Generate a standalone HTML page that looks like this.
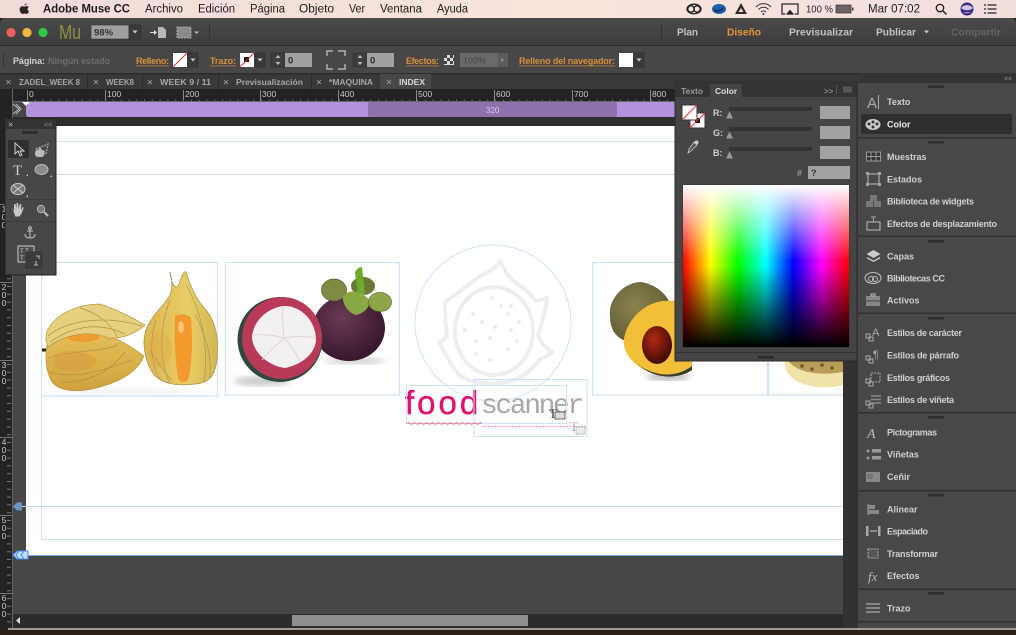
<!DOCTYPE html>
<html><head><meta charset="utf-8"><style>
html,body{margin:0;padding:0;background:#2a2018;width:1016px;height:635px;overflow:hidden}
svg{display:block;font-family:"Liberation Sans",sans-serif;filter:blur(.35px)}
.m{font-size:11.5px;fill:#1f1a1a}
.b{font-size:9px;font-weight:bold;fill:#d0d0d0}
.o{font-size:9px;font-weight:bold;fill:#d8913a}
.t{font-size:8.5px;font-weight:bold;fill:#a6a6a6}
.r{font-size:8.5px;fill:#c8c8c8}
.n{font-size:10.5px;font-weight:bold;fill:#c4c4c4}
.i{fill:none;stroke:#aaa;stroke-width:1.2}
.f{fill:#a4a4a4}
</style></head><body>
<svg width="1016" height="635" viewBox="0 0 1016 635" xmlns="http://www.w3.org/2000/svg">
<defs>
<linearGradient id="mb" x1="0" x2="1" y1="0" y2="0"><stop offset="0" stop-color="#f3dcd8"/><stop offset=".55" stop-color="#fbe4dc"/><stop offset="1" stop-color="#f2dedd"/></linearGradient>
<linearGradient id="tb" x1="0" x2="0" y1="0" y2="1"><stop offset="0" stop-color="#4a4a4a"/><stop offset="1" stop-color="#3d3d3d"/></linearGradient>
<linearGradient id="sp" x1="0" x2="1" y1="0" y2="0"><stop offset="0" stop-color="#f00"/><stop offset=".1667" stop-color="#ff0"/><stop offset=".3333" stop-color="#0f0"/><stop offset=".5" stop-color="#0ff"/><stop offset=".6667" stop-color="#00f"/><stop offset=".8333" stop-color="#f0f"/><stop offset="1" stop-color="#f00"/></linearGradient>
<linearGradient id="wb" x1="0" x2="0" y1="0" y2="1"><stop offset="0" stop-color="#fff"/><stop offset=".47" stop-color="#fff" stop-opacity="0"/><stop offset=".5" stop-color="#000" stop-opacity="0"/><stop offset="1" stop-color="#000"/></linearGradient>
<radialGradient id="pu" cx=".4" cy=".35" r=".7"><stop offset="0" stop-color="#6b3a52"/><stop offset="1" stop-color="#33152b"/></radialGradient>
<radialGradient id="ma" cx=".4" cy=".4" r=".7"><stop offset="0" stop-color="#8a8250"/><stop offset="1" stop-color="#5c5a30"/></radialGradient>
<radialGradient id="se" cx=".4" cy=".35" r=".7"><stop offset="0" stop-color="#b02a14"/><stop offset="1" stop-color="#3a0804"/></radialGradient>
<linearGradient id="hu" x1="0" x2="0" y1="0" y2="1"><stop offset="0" stop-color="#e2bd57"/><stop offset=".6" stop-color="#d9ae48"/><stop offset="1" stop-color="#cfa040"/></linearGradient>
<linearGradient id="hr" x1="0" x2="1" y1="0" y2="0"><stop offset="0" stop-color="#dcb550"/><stop offset=".6" stop-color="#e8cd66"/><stop offset="1" stop-color="#d3b650"/></linearGradient>
<filter id="bl"><feGaussianBlur stdDeviation="3"/></filter>
</defs>

<rect width="1016" height="635" fill="#2a2018"/>
<rect width="1016" height="18" fill="url(#mb)"/>
<path d="M25 5.500C26 5 26.500 4.500 26.600 3.200 25.400 3.500 24.500 4.300 24.600 5.500ZM22.600 6.200C21 6.200 19.600 7.400 19.600 9.400 19.600 11.800 21.400 14 22.600 14 23.300 14 23.700 13.500 24.600 13.500 25.500 13.500 25.900 14 26.600 14 27.700 14 28.800 12.200 29 11.300 27.200 10.500 27.100 8 28.800 7 28 6.300 27.200 6.100 26.500 6.100 25.700 6.100 25 6.600 24.600 6.600 24.100 6.600 23.400 6.200 22.600 6.200Z" fill="#2a2626"/>
<text x="43" y="12.500" class="m" font-weight="bold" textLength="87" lengthAdjust="spacingAndGlyphs">Adobe Muse CC</text>
<text x="145" y="12.500" class="m" textLength="38" lengthAdjust="spacingAndGlyphs">Archivo</text>
<text x="198" y="12.500" class="m" textLength="37" lengthAdjust="spacingAndGlyphs">Edición</text>
<text x="250" y="12.500" class="m" textLength="35" lengthAdjust="spacingAndGlyphs">Página</text>
<text x="299" y="12.500" class="m" textLength="35" lengthAdjust="spacingAndGlyphs">Objeto</text>
<text x="349" y="12.500" class="m" textLength="16" lengthAdjust="spacingAndGlyphs">Ver</text>
<text x="380" y="12.500" class="m" textLength="42" lengthAdjust="spacingAndGlyphs">Ventana</text>
<text x="437" y="12.500" class="m" textLength="31" lengthAdjust="spacingAndGlyphs">Ayuda</text>
<g fill="none" stroke="#222" stroke-width="1.300"><circle cx="691" cy="9" r="3.200"/><circle cx="697" cy="9" r="3.200"/><ellipse cx="694" cy="9" rx="7" ry="4.800"/></g>
<ellipse cx="719" cy="9" rx="7" ry="5" fill="#1b5fa8"/><path d="M714 10c3 2 7 1 9-2" stroke="#0b2b55" stroke-width="1.600" fill="none"/>
<path d="M741 3l6 11h-12z" fill="#332a2a"/><path d="M741 8l2.400 4h-4.800z" fill="#f6e0da"/>
<g fill="none" stroke="#333" stroke-width="1.100"><path d="M756 7c4-4.500 11-4.500 15 0"/><path d="M758.500 9.500c2.800-3 7.200-3 10 0"/><path d="M761 12c1.500-1.500 3.500-1.500 5 0"/></g><circle cx="763.500" cy="14" r="1" fill="#333"/>
<rect x="782" y="4" width="16" height="10" fill="none" stroke="#222" stroke-width="1.200"/><path d="M790 9l5 6h-10z" fill="#222" stroke="#f8e2dc" stroke-width=".8"/>
<text x="806" y="12.500" font-size="10.500" fill="#222" textLength="27" lengthAdjust="spacingAndGlyphs">100 %</text>
<rect x="836" y="5" width="15" height="8" fill="#666" stroke="#333" stroke-width=".7"/><rect x="852" y="7.500" width="1.500" height="3" fill="#333"/>
<text x="868" y="12.500" font-size="11.500" fill="#222" textLength="52" lengthAdjust="spacingAndGlyphs">Mar 07:02</text>
<circle cx="940" cy="8" r="3.700" fill="none" stroke="#222" stroke-width="1.300"/><path d="M943 11l3.500 3.500" stroke="#222" stroke-width="1.500"/>
<circle cx="967" cy="9" r="6.500" fill="#2b2f86"/><path d="M961 8c3-4 9-4 12 0-3 3-9 3-12 0z" fill="#d9c0e8"/><path d="M963 12c2 1.800 6 1.800 8 0z" fill="#e06aa8"/>
<g stroke="#222" stroke-width="1.300"><path d="M984 5h2M987.500 5h9M984 9h2M987.500 9h9M984 13h2M987.500 13h9"/></g>

<path d="M0 24Q0 18 6 18H1010Q1016 18 1016 24V628H0Z" fill="#474747"/>
<path d="M0 24Q0 18 6 18H1010Q1016 18 1016 24V45H0Z" fill="url(#tb)"/>
<rect y="45" width="1016" height="1" fill="#2f2f2f"/>
<circle cx="11" cy="32.500" r="4.600" fill="#ee5f5b"/><circle cx="27" cy="32.500" r="4.600" fill="#f5b63f"/><circle cx="43" cy="32.500" r="4.600" fill="#33c748"/>
<text x="59" y="39" font-size="20" fill="#8f9146" textLength="22" lengthAdjust="spacingAndGlyphs">Mu</text>
<rect x="91" y="25" width="38" height="14" fill="#a0a0a0" stroke="#333" stroke-width=".6"/>
<text x="94" y="35.500" font-size="9.500" font-weight="bold" fill="#333">98%</text>
<rect x="129" y="25" width="12" height="14" fill="#3a3a3a" stroke="#2c2c2c" stroke-width=".6"/><path d="M132.500 30.500h5l-2.500 3z" fill="#ccc"/>
<path d="M158 27h5l3 3v8h-8z" fill="#b8b8b8"/><path d="M150 32h4v-2l3 2.500-3 2.500v-2h-4z" fill="#ddd"/>
<rect x="177" y="27" width="14" height="11" fill="#8a8a8a" stroke="#bbb" stroke-width=".8" stroke-dasharray="2 1"/><path d="M194 31.500h5l-2.500 2.500z" fill="#bbb"/>
<rect x="209" y="24" width="1" height="16" fill="#333"/><rect x="661" y="24" width="1" height="16" fill="#333"/>
<text x="677" y="35.500" class="n" textLength="21" lengthAdjust="spacingAndGlyphs">Plan</text>
<text x="727" y="35.500" class="n" style="fill:#e8963a" textLength="34" lengthAdjust="spacingAndGlyphs">Diseño</text>
<text x="789" y="35.500" class="n" textLength="64" lengthAdjust="spacingAndGlyphs">Previsualizar</text>
<text x="876" y="35.500" class="n" textLength="40" lengthAdjust="spacingAndGlyphs">Publicar</text>
<path d="M924 30.500h5l-2.500 3z" fill="#ccc"/>
<text x="951" y="35.500" class="n" style="fill:#666" textLength="50" lengthAdjust="spacingAndGlyphs">Compartir</text>

<rect x="3" y="52" width="1" height="15" fill="#333"/>
<text x="13" y="64" class="b" textLength="32">Página:</text>
<text x="48" y="64" font-size="9" font-weight="bold" fill="#6e6e6e" textLength="62">Ningún estado</text>
<text x="136" y="64" class="o" textLength="33">Relleno:</text><rect x="136" y="65.500" width="33" height=".8" fill="#c8822f"/>
<rect x="173" y="53" width="14" height="14" fill="#fff"/><path d="M173 67L187 53" stroke="#e33" stroke-width="1"/>
<rect x="188" y="53" width="10" height="14" fill="#3a3a3a" stroke="#2e2e2e" stroke-width=".6"/><path d="M190.500 58.500h5l-2.500 3z" fill="#ccc"/>
<text x="210" y="64" class="o" textLength="26">Trazo:</text><rect x="210" y="65.500" width="26" height=".8" fill="#c8822f"/>
<rect x="240" y="53" width="14" height="14" fill="#fff"/><rect x="244" y="57" width="5" height="5" fill="#111"/><path d="M240 67L254 53" stroke="#e33" stroke-width="1"/>
<rect x="255" y="53" width="10" height="14" fill="#3a3a3a" stroke="#2e2e2e" stroke-width=".6"/><path d="M257.500 58.500h5l-2.500 3z" fill="#ccc"/>
<rect x="271" y="53" width="14" height="14" fill="#3d3d3d" stroke="#2e2e2e" stroke-width=".6"/><path d="M275.500 58l2.500-3 2.500 3zM275.500 62l2.500 3 2.500-3z" fill="#bbb"/>
<rect x="285" y="53" width="27" height="14" fill="#a0a0a0"/><text x="288" y="63.500" font-size="9.500" font-weight="bold" fill="#2c2c2c">0</text>
<path d="M327 56v-5h6M338 51h7v5M345 64v5h-7M333 69h-6v-5" fill="none" stroke="#c8c8c8" stroke-width="1.200"/>
<rect x="353" y="53" width="14" height="14" fill="#3d3d3d" stroke="#2e2e2e" stroke-width=".6"/><path d="M357.500 58l2.500-3 2.500 3zM357.500 62l2.500 3 2.500-3z" fill="#bbb"/>
<rect x="367" y="53" width="27" height="14" fill="#a0a0a0"/><text x="370" y="63.500" font-size="9.500" font-weight="bold" fill="#2c2c2c">0</text>
<text x="406" y="64" class="o" textLength="33">Efectos:</text><rect x="406" y="65.500" width="33" height=".8" fill="#c8822f"/>
<rect x="444" y="55" width="10" height="10" fill="#ddd"/><path d="M444 55h3v3h-3zM450 55h3v3h-3zM447 58h3v3h-3zM453 58h1v3h-1zM444 61h3v3h-3zM450 61h3v3h-3z" fill="#444"/>
<rect x="460" y="53" width="38" height="14" fill="#6a6a6a"/><text x="463" y="63.500" font-size="9" font-weight="bold" fill="#505050">100%</text>
<rect x="498" y="53" width="10" height="14" fill="#5c5c5c"/><path d="M501 57.500l3.500 2.500-3.500 2.500z" fill="#858585"/>
<text x="519" y="64" class="o" textLength="96">Relleno del navegador:</text><rect x="519" y="65.500" width="96" height=".8" fill="#c8822f"/>
<rect x="619" y="53" width="14" height="14" fill="#fff"/>
<rect x="634" y="53" width="10" height="14" fill="#3a3a3a" stroke="#2e2e2e" stroke-width=".6"/><path d="M636.500 58.500h5l-2.500 3z" fill="#ccc"/>

<rect y="73" width="1016" height="1.500" fill="#2c2c2c"/>
<rect y="74.500" width="1016" height="14.500" fill="#393939"/>
<rect x="380" y="74" width="51" height="15" fill="#484848"/>
<g fill="#2a2a2a"><rect x="87" y="74" width="1" height="15"/><rect x="142" y="74" width="1" height="15"/><rect x="218" y="74" width="1" height="15"/><rect x="311" y="74" width="1" height="15"/></g>
<g font-size="10" fill="#aaa"><text x="5.500" y="85.500">×</text><text x="93" y="85.500">×</text><text x="147" y="85.500">×</text><text x="223" y="85.500">×</text><text x="316" y="85.500">×</text><text x="386" y="85.500">×</text></g>
<text x="19" y="85" class="t" textLength="61" lengthAdjust="spacingAndGlyphs">ZADEL_WEEK 8</text>
<text x="106" y="85" class="t" textLength="28" lengthAdjust="spacingAndGlyphs">WEEK8</text>
<text x="160" y="85" class="t" textLength="51" lengthAdjust="spacingAndGlyphs">WEEK 9 / 11</text>
<text x="236" y="85" class="t" textLength="67" lengthAdjust="spacingAndGlyphs">Previsualización</text>
<text x="329" y="85" class="t" textLength="44" lengthAdjust="spacingAndGlyphs">*MAQUINA</text>
<text x="399" y="85" class="t" style="fill:#d8d8d8" textLength="26" lengthAdjust="spacingAndGlyphs">INDEX</text>

<rect y="89" width="858" height="539" fill="#474747"/>
<rect y="89" width="13" height="539" fill="#232323"/>
<rect x="843" y="89" width="15" height="539" fill="#323232"/>
<rect x="13" y="117" width="830" height="9" fill="#2e2e2e"/>
<rect x="26" y="126" width="817" height="429" fill="#fff"/>
<rect x="26" y="555" width="817" height="1" fill="#7ab0f0"/>

<g fill="none" stroke="#cfe3f7" stroke-width="1">
<path d="M57 141.500H676"/>
<path d="M57 174.500H676" stroke="#d8d8f6"/>
<path d="M41.500 396V539.500H843"/>
<rect x="41.500" y="262.500" width="176" height="133.500" stroke-width="1.200"/>
<rect x="225.500" y="262.500" width="174" height="132.500" stroke-width="1.200"/>
<rect x="592.500" y="262.500" width="175" height="132.500" stroke-width="1.200"/>
<path d="M843 262.500H768.500V395H843" stroke-width="1.200"/>
<circle cx="493" cy="323" r="78"/>
<path d="M13 506.500H843" stroke="#c4dcf7"/>
</g>

<!-- physalis -->
<ellipse cx="130" cy="391" rx="80" ry="3" fill="#f2f2f2" filter="url(#bl)"/>
<rect x="42" y="348.500" width="6" height="3" fill="#2c2013"/>
<path d="M47 345C70 332 100 333 112 338 120 340 132 347 144 356 138 370 125 380 100 387 80 393 60 392 52 382 45 370 45 355 47 345Z" fill="url(#hu)" stroke="#b8973e" stroke-width=".7"/>
<ellipse cx="83" cy="336" rx="17" ry="6" fill="#ee9c30"/>
<path d="M46 340C44 322 70 304 100 304 118 310 135 319 145 325 134 335 120 339 108 338 88 329 62 336 48 347Z" fill="#e6d080" stroke="#b8973e" stroke-width=".7"/>
<path d="M48 336C70 318 110 316 142 326M50 342C75 325 100 322 125 334M80 308C95 312 110 322 118 338M48 358C75 350 100 352 118 345M50 372C75 380 105 370 132 360M60 382C85 384 110 372 125 352" fill="none" stroke="#ae9240" stroke-width=".7"/>
<path d="M55 354C72 348 90 352 98 362 85 374 65 374 54 366Z" fill="#d8913a" opacity=".4"/>
<path d="M170 273C172 285 176 291 179 284 182 274 185 270 186 272 190 285 196 300 206 310 216 322 219 340 217 360 215 375 210 383 195 384 180 386 165 385 155 376 146 365 141 345 146 330 151 315 165 305 170 295 173 285 172 278 170 272Z" fill="url(#hr)" stroke="#a89050" stroke-width=".7"/>
<path d="M175 316C180 313 188 314 191 318 193 340 192 365 188 380 183 384 180 382 178 378 175 360 174 335 175 316Z" fill="#f29a2c"/>
<ellipse cx="181" cy="327" rx="3" ry="6" fill="#f9c37a"/>
<path d="M170 300C160 325 158 360 170 383M156 320C148 345 152 370 162 381M186 285C198 305 210 340 204 382M196 315C204 335 212 350 210 378M150 350C160 365 166 375 172 380" fill="none" stroke="#a8965a" stroke-width=".7"/>
<ellipse cx="160" cy="350" rx="12" ry="18" fill="#e0a040" opacity=".3"/>

<!-- mangosteen -->
<ellipse cx="262" cy="381" rx="28" ry="5" fill="#ccc" filter="url(#bl)"/>
<ellipse cx="355" cy="361" rx="30" ry="3" fill="#ccc" filter="url(#bl)"/>
<ellipse cx="349" cy="328" rx="36" ry="33" fill="url(#pu)"/>
<ellipse cx="363" cy="286" rx="12" ry="9" fill="#6a7a35"/>
<path d="M358 268L362 267 365 294 358 296 355 272Z" fill="#6eaa2c"/>
<ellipse cx="334" cy="290" rx="12.500" ry="11" fill="#7f8a42" stroke="#5a5530" stroke-width=".7"/>
<path d="M343 296C350 288 362 291 369 300 371 308 362 314 356 315 347 312 342 303 343 296Z" fill="#87a842"/>
<ellipse cx="380" cy="302" rx="11.500" ry="9.500" fill="#8ca546" stroke="#5d6d2e" stroke-width=".7"/>
<circle cx="280" cy="339.500" r="42.500" fill="#2f4a3c"/>
<ellipse cx="282" cy="338" rx="40" ry="41" fill="#b83a58"/>
<path d="M283 306C300 305 316 320 316 340 315 355 300 365 285 368 268 366 252 352 252 336 254 320 268 308 283 306Z" fill="#f3f0f0"/>
<path d="M283 306C282 318 283 330 284 338M252 335C262 334 275 335 284 338M316 338C306 336 294 336 284 338M262 360C270 350 278 344 284 338M300 362C296 352 290 344 284 338" fill="none" stroke="#dcd6d6" stroke-width="1"/>

<!-- dragon fruit logo -->
<g fill="none" stroke="#eeeeee" stroke-width="4" stroke-linejoin="round">
<path d="M501 261C503 270 508 276 515 282 524 288 532 296 536 301L547 298C546 310 542 324 538 335 541 344 547 349 553 352 547 356 543 358 540 359 530 374 515 383 493 384 472 383 460 378 455 370 449 362 444 350 439 343L447 337C445 320 445 310 445 302 456 295 468 285 480 276 488 272 496 268 501 261Z"/>
<ellipse cx="494" cy="331" rx="39" ry="44"/>
</g>
<g fill="#ececec"><circle cx="492" cy="298" r="2"/><circle cx="501" cy="306" r="2"/><circle cx="511" cy="306" r="2"/><circle cx="473" cy="314" r="2"/><circle cx="482" cy="322" r="2"/><circle cx="508" cy="314" r="2"/><circle cx="519" cy="322" r="2"/><circle cx="465" cy="330" r="2"/><circle cx="495" cy="327" r="2"/><circle cx="511" cy="330" r="2"/><circle cx="476" cy="341" r="2"/><circle cx="490" cy="338" r="2"/><circle cx="517" cy="341" r="2"/><circle cx="508" cy="349" r="2"/><circle cx="476" cy="354" r="2"/><circle cx="490" cy="360" r="2"/></g>

<!-- mango -->
<ellipse cx="668" cy="377" rx="22" ry="3" fill="#aaa" filter="url(#bl)"/>
<path d="M610 316C608 298 625 282 641 282 655 284 668 294 672 308L628 342C616 338 610 330 610 316Z" fill="url(#ma)"/>
<path d="M663 301C645 303 628 318 624 338 622 352 632 365 650 372 665 377 680 374 692 366L690 300Z" fill="#f4bf38"/>
<path d="M634 360C640 368 650 372 660 374 672 376 684 372 692 366V370C678 380 650 380 634 360Z" fill="#3b4020"/>
<ellipse cx="657" cy="345" rx="15" ry="19" fill="url(#se)"/>
<!-- passion fruit -->
<path d="M785 361H843V385C825 390 795 388 786 370Z" fill="#efe3aa"/>
<path d="M788 361H843V372C825 375 800 375 788 361Z" fill="#b89c58"/>
<g fill="#6e5a30"><circle cx="802" cy="366" r="1.800"/><circle cx="812" cy="369" r="1.800"/><circle cx="822" cy="365" r="1.800"/><circle cx="832" cy="368" r="1.800"/></g>

<!-- food scanner -->
<text x="481" y="413" font-family="'Liberation Mono',monospace" font-size="28" fill="#a8a8a8" letter-spacing="-2.400">scanner</text>
<text x="405" y="414" font-size="33" fill="#e0106e" stroke="#e0106e" stroke-width=".4" letter-spacing="3">food</text>
<g fill="none" stroke="#cfe3f7"><rect x="406.500" y="385.500" width="160" height="38"/><rect x="474" y="379.500" width="113" height="57"/></g>
<path d="M407 423.500q1.500-1.500 3 0t3 0 3 0 3 0 3 0 3 0 3 0 3 0 3 0 3 0 3 0 3 0 3 0 3 0 3 0 3 0 3 0 3 0 3 0 3 0 3 0 3 0 3 0 3 0 3 0" fill="none" stroke="#e06080" stroke-width=".9"/>
<path d="M482 426.500H587" stroke="#f2a8b0" stroke-width="1.200" stroke-dasharray="2 1"/>
<text x="549" y="418" font-family="'Liberation Serif',serif" font-size="13" fill="#333">T</text><rect x="555" y="412" width="10" height="7" fill="#ddd" stroke="#333" stroke-width=".7"/>
<text x="570" y="431" font-family="'Liberation Serif',serif" font-size="13" fill="#aaa">T</text><rect x="576" y="427" width="9" height="7" fill="#eee" stroke="#aaa" stroke-width=".7"/>

<!-- rulers -->
<rect x="13" y="89" width="830" height="13" fill="#232323"/>
<g fill="#8a8a8a"><rect x="27" y="90" width="1" height="11"/><rect x="105" y="90" width="1" height="11"/><rect x="183" y="90" width="1" height="11"/><rect x="260" y="90" width="1" height="11"/><rect x="338" y="90" width="1" height="11"/><rect x="416" y="90" width="1" height="11"/><rect x="494" y="90" width="1" height="11"/><rect x="572" y="90" width="1" height="11"/><rect x="650" y="90" width="1" height="11"/></g>
<path d="M27 100.500H843" stroke="#777" stroke-width="1.500" stroke-dasharray="1 6.800"/>
<g class="r"><text x="29" y="97">0</text><text x="107" y="97">100</text><text x="185" y="97">200</text><text x="262" y="97">300</text><text x="340" y="97">400</text><text x="418" y="97">500</text><text x="496" y="97">600</text><text x="574" y="97">700</text><text x="652" y="97">800</text></g>
<path d="M9 130V628" stroke="#777" stroke-width="4" stroke-dasharray="1 6.800"/>
<g fill="#777"><rect y="204" width="13" height="1"/><rect y="282" width="13" height="1"/><rect y="360" width="13" height="1"/><rect y="437" width="13" height="1"/><rect y="515" width="13" height="1"/><rect y="593" width="13" height="1"/></g>
<g class="r" text-anchor="middle"><text x="4" y="212">1</text><text x="4" y="220">0</text><text x="4" y="228">0</text>
<text x="4" y="290">2</text><text x="4" y="298">0</text><text x="4" y="306">0</text>
<text x="4" y="368">3</text><text x="4" y="376">0</text><text x="4" y="384">0</text>
<text x="4" y="445">4</text><text x="4" y="453">0</text><text x="4" y="461">0</text>
<text x="4" y="523">5</text><text x="4" y="531">0</text><text x="4" y="539">0</text>
<text x="4" y="601">6</text><text x="4" y="609">0</text><text x="4" y="617">0</text></g>
<rect x="12" y="89" width="1" height="539" fill="#666"/>
<rect x="13" y="101" width="830" height="1" fill="#666"/>
<path d="M26 105Q26 102 29 102H843V117H29Q26 117 26 114Z" fill="#b592dd"/>
<rect x="368" y="102" width="249" height="15" rx="2" fill="#8f72ab"/>
<text x="486" y="113" font-size="8" fill="#d8c8e8">320</text>
<path d="M22 102h8l-4 4z" fill="#fff"/>
<path d="M13 104l6 5-6 5M16 104l5 5-5 5" fill="none" stroke="#bbb" stroke-width="1"/>
<path d="M13 506.500l4-4h5v8h-5z" fill="#6b95c0"/>
<path d="M13 555l4-4h11v8H17z" fill="#bfe0ff" stroke="#3c8cf0" stroke-width="1"/><path d="M19 551l-3 4 3 4M24 551l-3 4 3 4" fill="none" stroke="#3c8cf0"/>
<!-- scrollbar -->
<rect x="13" y="614" width="830" height="14" fill="#2c2c2c"/>
<rect x="292" y="615" width="236" height="11" fill="#8f8f8f"/>
<path d="M20 617l-4 3.500 4 3.500z" fill="#ddd"/>
<rect x="8" y="628" width="1008" height="2" fill="#9a9a9a"/>
<rect y="630" width="1016" height="5" fill="#2a2018"/>

<!-- tools panel -->
<rect x="5" y="119" width="51" height="156" fill="#474747" stroke="#222" stroke-width="1"/>
<rect x="5" y="119" width="51" height="10" fill="#333"/>
<text x="8" y="127.500" font-size="9" fill="#bbb">×</text>
<text x="44" y="127" font-size="7" fill="#999">&lt;&lt;</text>
<rect x="22" y="131" width="16" height="3" fill="#2e2e2e"/>
<rect x="8" y="140" width="21" height="18" fill="#2f2f2f"/>
<path d="M15 143v11l3-3 2 5 2-1-2-4h4z" fill="#333" stroke="#ddd" stroke-width=".9"/>
<path d="M36 149l12-5-2 10h-8z" fill="none" stroke="#aaa" stroke-width="1.200" stroke-dasharray="2 1"/><path d="M35 155c0-4 1-6 3-5l2-3 2 3 3 1-2 6h-6z" fill="#bbb"/>
<text x="13" y="175" font-family="'Liberation Serif',serif" font-size="15" fill="#ccc">T</text>
<ellipse cx="41.500" cy="169.500" rx="6.500" ry="5" fill="#8c8c8c" stroke="#bbb"/>
<ellipse cx="18" cy="189" rx="7" ry="5.500" fill="#777" stroke="#ccc"/><path d="M13 185l10 8M23 185l-10 8" stroke="#ccc"/>
<path d="M12 207l2 4v-7l1.500 0 1 5v-6h1.500l.8 6 1-5h1.500l-.3 6 1.800-3 1 .7-2.500 6.300-2 2.500h-4z" fill="#c8c8c8"/>
<circle cx="41" cy="209" r="3.600" fill="#777" stroke="#bbb"/><path d="M44 212l4 4" stroke="#bbb" stroke-width="2"/>
<rect x="6" y="199" width="49" height=".8" fill="#3a3a3a"/><rect x="6" y="221" width="49" height=".8" fill="#3a3a3a"/>
<path d="M30 228v10M27 231h6M25 234c0 3 2 4 5 4s5-1 5-4" fill="none" stroke="#bbb" stroke-width="1.100"/><circle cx="30" cy="228" r="1.400" fill="none" stroke="#bbb"/>
<rect x="18" y="246" width="16" height="16" fill="#4d4d4d" stroke="#ccc"/><text x="20" y="253" font-size="6" fill="#ccc">T T</text><text x="20" y="260" font-size="6" fill="#ccc">T T</text>
<rect x="26" y="252" width="16" height="16" fill="#3c3c3c" stroke="#333"/><path d="M36 256h3v3M34 265h4M36 261v4" stroke="#bbb" fill="none"/>
<path d="M26 176l2 0v-2zM50 177l2 0v-2zM26 197l2 0v-2z" fill="#ccc"/>

<!-- right panel -->
<rect x="858" y="73" width="158" height="555" fill="#484848"/>
<rect x="858" y="73" width="158" height="10" fill="#343434"/>
<text x="1004" y="81" font-size="7" fill="#999">&lt;&lt;</text>
<g fill="#303030"><rect x="858" y="137" width="158" height="1.500"/><rect x="858" y="235.500" width="158" height="1.500"/><rect x="858" y="312.500" width="158" height="1.500"/><rect x="858" y="412" width="158" height="1.500"/><rect x="858" y="490" width="158" height="1.500"/><rect x="858" y="588.500" width="158" height="1.500"/><rect x="858" y="621" width="158" height="1.500"/></g>
<g fill="#2e2e2e"><rect x="928" y="85.500" width="16" height="2.500"/><rect x="928" y="141" width="16" height="2.500"/><rect x="928" y="240" width="16" height="2.500"/><rect x="928" y="317" width="16" height="2.500"/><rect x="928" y="416" width="16" height="2.500"/><rect x="928" y="494" width="16" height="2.500"/><rect x="928" y="592" width="16" height="2.500"/></g>
<rect x="861" y="114" width="151" height="20" rx="2" fill="#2f2f2f"/>
<g class="b">
<text x="887" y="105">Texto</text><text x="887" y="127.500" style="fill:#eee">Color</text>
<text x="887" y="160">Muestras</text><text x="887" y="182.500">Estados</text>
<text x="887" y="204.500" textLength="87">Biblioteca de widgets</text><text x="887" y="227" textLength="110">Efectos de desplazamiento</text>
<text x="887" y="259.500">Capas</text><text x="887" y="281.500" textLength="58">Bibliotecas CC</text><text x="887" y="303.500">Activos</text>
<text x="887" y="336" textLength="75">Estilos de carácter</text><text x="887" y="358.500" textLength="72">Estilos de párrafo</text><text x="887" y="381" textLength="63">Estilos gráficos</text><text x="887" y="403" textLength="67">Estilos de viñeta</text>
<text x="887" y="435.500" textLength="50">Pictogramas</text><text x="887" y="457.500">Viñetas</text><text x="887" y="480">Ceñir</text>
<text x="887" y="512.500">Alinear</text><text x="887" y="534.500" textLength="41">Espaciado</text><text x="887" y="557" textLength="51">Transformar</text><text x="887" y="579">Efectos</text>
<text x="887" y="611.500">Trazo</text>
</g>
<text x="867" y="108" font-size="15" fill="#aaa">A</text><rect x="878" y="95" width="1" height="14" fill="#aaa"/>
<ellipse cx="873" cy="124.500" rx="7.500" ry="5.500" fill="#ccc"/><circle cx="869" cy="124" r="1.500" fill="#333"/><circle cx="873" cy="122" r="1.500" fill="#333"/><circle cx="877" cy="124" r="1.500" fill="#333"/><circle cx="873" cy="127" r="1.500" fill="#333"/>
<rect x="866.500" y="152" width="14" height="9" fill="#333" stroke="#999"/><path d="M871 152v9M876 152v9M867 156.500h13" stroke="#999"/>
<rect x="868" y="174" width="11" height="10" class="i"/><rect x="866" y="172" width="3" height="3" class="f"/><rect x="878" y="172" width="3" height="3" class="f"/><rect x="866" y="183" width="3" height="3" class="f"/><rect x="878" y="183" width="3" height="3" class="f"/>
<rect x="870" y="195" width="7" height="6" fill="#777"/><rect x="866" y="201" width="7" height="6" fill="#777"/><rect x="874" y="201" width="7" height="6" fill="#777"/>
<rect x="867" y="222" width="13" height="8" class="i"/><path d="M873.500 217v5M871 217h5" stroke="#aaa"/>
<path d="M873.500 250l7 4-7 4-7-4z" fill="#ccc"/><path d="M867 257l6.500 3.500 6.500-3.500v1.500l-6.500 3.500-6.500-3.500z" fill="#ccc"/>
<g fill="none" stroke="#bbb" stroke-width="1.100"><ellipse cx="873" cy="278" rx="8" ry="5.500"/><circle cx="871" cy="279" r="2.500"/><circle cx="875" cy="279" r="2.500"/></g>
<rect x="866" y="296" width="14" height="10" fill="#888"/><rect x="871" y="294" width="4" height="2" class="i"/><rect x="866" y="300.500" width="14" height="1" fill="#444"/>
<g fill="none" stroke="#aaa" stroke-width="1"><rect x="866" y="334" width="4" height="4"/><rect x="869" y="337" width="4" height="4"/><rect x="866" y="356" width="4" height="4"/><rect x="869" y="359" width="4" height="4"/><rect x="866" y="379" width="4" height="4"/><rect x="869" y="382" width="4" height="4"/><rect x="866" y="401" width="4" height="4"/><rect x="869" y="404" width="4" height="4"/></g>
<text x="872" y="336" font-size="11" fill="#aaa">A</text>
<text x="873" y="358" font-size="11" fill="#aaa">¶</text>
<rect x="871" y="373" width="9" height="9" fill="none" stroke="#aaa" stroke-dasharray="2 1"/>
<path d="M871 396h10M871 399.500h10M871 403h10" stroke="#888" stroke-width="1.500"/>
<text x="867" y="438" font-family="'Liberation Serif',serif" font-style="italic" font-size="14" fill="#bbb">A</text>
<g fill="#999"><circle cx="868" cy="451" r="1.500"/><circle cx="868" cy="458" r="1.500"/><rect x="872" y="449" width="9" height="3.500"/><rect x="872" y="456" width="9" height="3.500"/></g>
<rect x="866" y="472" width="14" height="10" fill="#888"/><rect x="868" y="475" width="4" height="3" fill="none" stroke="#555" stroke-width=".7"/>
<path d="M868 504v11" stroke="#aaa" stroke-width="1"/><rect x="868" y="505" width="7" height="4" fill="#888"/><rect x="868" y="510" width="11" height="4" fill="#888"/>
<rect x="866" y="526" width="2.500" height="10" fill="#aaa"/><rect x="878" y="526" width="2.500" height="10" fill="#aaa"/><path d="M870 531h7" stroke="#ccc"/>
<rect x="868" y="549" width="10" height="9" fill="#555" stroke="#aaa" stroke-dasharray="2 1"/>
<text x="868" y="581" font-family="'Liberation Serif',serif" font-style="italic" font-size="13" fill="#bbb">fx</text>
<path d="M866 604h14M866 608h14M866 612h14" stroke="#aaa" stroke-width="1.300"/>

<!-- color panel -->
<rect x="675" y="82" width="182" height="279" fill="#454545" stroke="#2a2a2a" stroke-width="1"/>
<rect x="675" y="82" width="182" height="15" fill="#343434"/>
<rect x="710" y="84" width="32" height="13" fill="#454545"/>
<text x="681" y="94" class="t" style="fill:#999">Texto</text>
<text x="715" y="94" class="t" style="fill:#ddd">Color</text>
<text x="824" y="94" font-size="8" fill="#aaa">&gt;&gt;</text>
<rect x="836" y="85" width="1" height="9" fill="#555"/><rect x="843" y="86.500" width="9" height="6" fill="#555"/>
<rect x="690" y="113" width="15" height="15" fill="#fff" stroke="#333"/><rect x="695" y="118" width="5" height="5" fill="#111"/><path d="M690 128L705 113" stroke="#e33"/>
<rect x="682" y="105" width="15" height="15" fill="#fff" stroke="#333"/><path d="M682 120L697 105" stroke="#e33"/>
<path d="M694 142l3 3-6 6-3 2 1-4z" fill="#555" stroke="#ccc" stroke-width=".8"/><circle cx="696.500" cy="142.500" r="2" fill="#ccc"/>
<text x="713" y="116" class="b">R:</text><text x="713" y="136" class="b">G:</text><text x="713" y="156" class="b">B:</text>
<g fill="#333"><rect x="729" y="107" width="83" height="4" rx="1"/><rect x="729" y="127" width="83" height="4" rx="1"/><rect x="729" y="147" width="83" height="4" rx="1"/></g>
<g fill="#999"><path d="M726 118.500l3.500-7 3.500 7z"/><path d="M726 138.500l3.500-7 3.500 7z"/><path d="M726 158.500l3.500-7 3.500 7z"/></g>
<g fill="#a2a2a2"><rect x="820" y="106" width="30" height="13"/><rect x="820" y="126" width="30" height="13"/><rect x="820" y="146" width="30" height="13"/><rect x="808" y="166" width="42" height="13"/></g>
<text x="797" y="176" class="b" style="fill:#999">#</text>
<text x="811" y="176" font-size="9" font-weight="bold" fill="#333">?</text>
<rect x="682.500" y="184.500" width="167" height="163" fill="#333"/>
<rect x="683" y="185" width="166" height="162" fill="url(#sp)"/>
<rect x="683" y="185" width="166" height="162" fill="url(#wb)"/>
<rect x="676" y="352" width="180" height="1" fill="#333"/>
<rect x="758" y="356" width="16" height="2.500" fill="#2b2b2b"/>
</svg>
</body></html>
